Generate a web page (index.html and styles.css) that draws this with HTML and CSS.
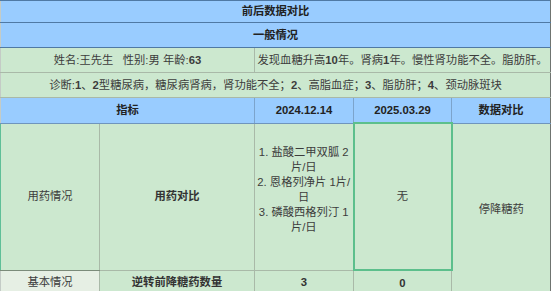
FILE: index.html
```html
<!DOCTYPE html>
<html lang="zh-CN">
<head>
<meta charset="utf-8">
<title>前后数据对比</title>
<link rel="stylesheet" href="styles.css">
</head>
<body>
<table class="report">
  <colgroup>
    <col class="c1"><col class="c2"><col class="c3"><col class="c4"><col class="c5">
  </colgroup>
  <tbody>
    <tr class="blue title-row"><td colspan="5" class="bold">前后数据对比</td></tr>
    <tr class="blue"><td colspan="5" class="bold">一般情况</td></tr>
    <tr class="green"><td colspan="2">姓名:王先生&nbsp;&nbsp;&nbsp;性别:男 年龄:<b>63</b></td><td colspan="3">发现血糖升高<b>10</b>年。肾病<b>1</b>年。慢性肾功能不全。脂肪肝。</td></tr>
    <tr class="green"><td colspan="5">诊断:<b>1</b>、<b>2</b>型糖尿病，糖尿病肾病，肾功能不全；<b>2</b>、高脂血症；<b>3</b>、脂肪肝；<b>4</b>、颈动脉斑块</td></tr>
    <tr class="blue head-row"><td colspan="2" class="bold">指标</td><td class="bold">2024.12.14</td><td class="bold">2025.03.29</td><td class="bold">数据对比</td></tr>
    <tr class="green med-row">
      <td class="edge">用药情况</td>
      <td class="bold-soft">用药对比</td>
      <td class="list-cell">
        <div class="med-list">
          <div>1. 盐酸二甲双胍 2片/日</div>
          <div>2. 恩格列净片 1片/日</div>
          <div>3. 磷酸西格列汀 1片/日</div>
        </div>
      </td>
      <td class="selected">无</td>
      <td rowspan="2" class="last">停降糖药</td>
    </tr>
    <tr class="green base-row">
      <td class="light">基本情况</td>
      <td class="bold-soft">逆转前降糖药数量</td>
      <td class="bold-soft">3</td>
      <td class="bold-soft">0</td>
    </tr>
  </tbody>
</table>
</body>
</html>
```

FILE: styles.css
```css
html, body {
  margin: 0;
  padding: 0;
  background: #ffffff;
}

.report {
  width: 550px;
  border-collapse: collapse;
  table-layout: fixed;
  font-family: "Liberation Sans", "Noto Sans CJK SC", sans-serif;
  font-size: 11.3px;
  color: #3c3c3c;
}

.c1 { width: 99px; }
.c2 { width: 155px; }
.c3 { width: 99px; }
.c4 { width: 98px; }
.c5 { width: 99px; }

.report td {
  text-align: center;
  vertical-align: middle;
  padding: 0 2px;
  border: 1px solid #a9b9a8;
  line-height: 15px;
}

.report td:first-child {
  border-left: 1px solid #c4cbc6;
}

.report td:last-child {
  border-right: 1px solid #6f7470;
}

.report b {
  font-weight: 600;
}

.blue td {
  background: #99ccff;
  border-top-color: #4f79a4;
  border-bottom-color: #4f79a4;
  border-left-color: #7ca4cc;
  border-right-color: #7ca4cc;
  height: 24px;
}

.title-row td {
  height: 21px;
}

.head-row td {
  border-top-color: #a9b9a8;
  border-bottom-color: #6f95bd;
}

.green td {
  background: #cce8cf;
  height: 24px;
}

.bold {
  font-weight: bold;
  color: #222222;
}

.bold-soft {
  font-weight: bold;
  color: #333333;
}

.med-row td {
  height: 145px;
}

.report td.edge {
  border-left: 1px solid #5fbf98;
  border-bottom-color: #7b8b7a;
}

.report td.list-cell {
  padding: 0 1px;
}

.med-list {
  padding-bottom: 14px;
  line-height: 15px;
}

.report td.selected {
  border: 2px solid #5cbf8c;
}

.report .light {
  background: #e6efe4;
}

.base-row td {
  height: 24px;
}
```
